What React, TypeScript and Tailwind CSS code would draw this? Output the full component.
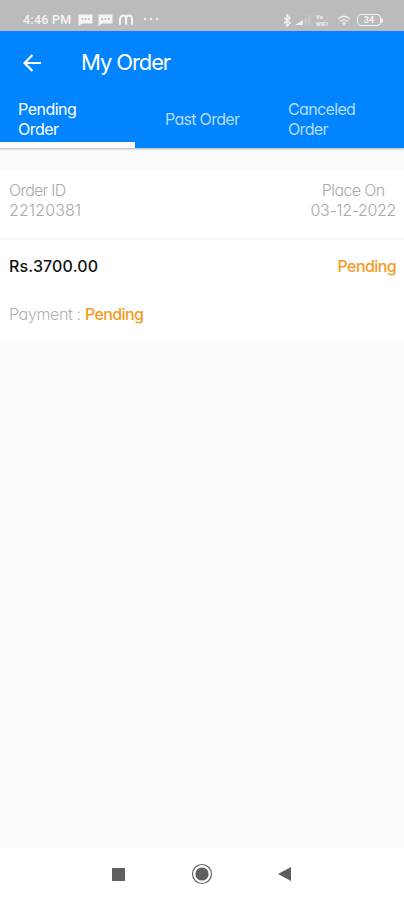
import React from "react";

function ChatIcon() {
  return (
    <svg width="15" height="12" viewBox="0 0 15 12" className="shrink-0">
      <path d="M0.5 0.5H14.5V9.5H4L0.5 12Z" fill="#f4f4f4" />
      <path d="M3.5 5h1.6M6.7 5h1.6M9.9 5h1.6" stroke="#a8a8a8" strokeWidth="1.4" />
    </svg>
  );
}

function StatusBar() {
  return (
    <div className="flex h-[31px] shrink-0 items-start bg-[#bbbbbb] pt-[13px] text-[#f4f4f4]">
      <span className="ml-[23px] w-[49px] whitespace-nowrap font-[Roboto] text-[12.5px] leading-[14px] font-medium tracking-[0.25px]">4:46 PM</span>
      <div className="ml-[6px] flex items-start gap-[5px] pt-px">
        <ChatIcon />
        <ChatIcon />
      </div>
      <svg width="14" height="12" viewBox="0 0 14 12" className="ml-[6px] mt-px" fill="none" stroke="#f4f4f4" strokeWidth="2">
        <path d="M1 10.8V5.5Q1.5 1.5 4.5 1.5Q7 1.5 7 4.5V10.8M7 4.5Q7.5 1.5 10 1.5Q13 1.5 13 4.5V10.8" />
      </svg>
      <svg width="16" height="4" viewBox="0 0 16 4" className="ml-[10px] mt-[4px]" fill="#ededed">
        <circle cx="2" cy="2" r="1.3" />
        <circle cx="8" cy="2" r="1.3" />
        <circle cx="14" cy="2" r="1.3" />
      </svg>
      <svg width="8" height="13" viewBox="0 0 8 13" className="ml-auto mt-px" fill="none" stroke="#f2f2f2" strokeWidth="1.4">
        <path d="M1 3.5L7 9L4 12V1L7 4L1 9.5" />
      </svg>
      <svg width="17" height="12" viewBox="0 0 17 12" className="ml-[4px] mt-px">
        <path d="M0 11L8 6V11Z" fill="#eeeeee" />
        <path d="M10.5 4V11M14.5 1V11" stroke="#cbcbcb" strokeWidth="1.8" />
      </svg>
      <div className="ml-[4px] mt-px w-[15px] whitespace-nowrap font-[Roboto] text-[5.5px] leading-[7px] font-bold tracking-[0.3px]">
        <div>Vo</div>
        <div>WiFi</div>
      </div>
      <svg width="14" height="12" viewBox="0 0 14 12" className="ml-[6px] mt-[2px]" fill="none" stroke="#eeeeee" strokeWidth="1.6">
        <path d="M1 4Q7 -1.5 13 4M3.5 6.5Q7 3.5 10.5 6.5" />
        <path d="M5 8Q7 6.5 9 8L7 10.5Z" fill="#eeeeee" stroke="none" />
      </svg>
      <div className="ml-[6px] mr-[21px] mt-px flex items-center">
        <div className="flex h-[12px] w-[24px] items-center justify-center rounded-[4px] border-[1.5px] border-[#f2f2f2] font-[Roboto] text-[9px] leading-none font-bold">34</div>
        <div className="h-[5px] w-[2px] rounded-r-full bg-[#f2f2f2]" />
      </div>
    </div>
  );
}

function Header() {
  return (
    <header className="h-[117px] shrink-0 bg-[#0084ff] text-white shadow-[0_1px_2px_rgba(0,0,0,0.3)]">
      <div className="flex h-[61px] items-center pl-[23px]">
        <svg width="18" height="18" viewBox="0 0 18 18" className="mt-[2px]" fill="none" stroke="white" strokeWidth="2.2">
          <path d="M18 9H1.5M9.5 1L1.5 9L9.5 17" />
        </svg>
        <h1 className="ml-[40px] text-[22px] leading-[28px] tracking-[-1.1px]">My Order</h1>
      </div>
      <nav className="flex h-[56px] text-[16px] leading-5">
        <div className="flex w-[135px] flex-col">
          <div className="h-[50px] pl-[18px] pt-[7px] tracking-[-0.5px]">Pending<br />Order</div>
          <div className="h-[6px] bg-white" />
        </div>
        <div className="w-[134px] pl-[30px] pt-[17px] tracking-[-0.7px] text-[#b5dcff]">Past Order</div>
        <div className="pl-[19px] pt-[7px] tracking-[-0.65px] text-[#b5dcff]">Canceled<br />Order</div>
      </nav>
    </header>
  );
}

function OrderCard() {
  return (
    <section className="mt-[23px] h-[172px] bg-white text-[16px]">
      <div className="flex h-[69px] justify-between border-b-2 border-[#f7f7f7] pt-[9px] pl-[9px] pr-[8px] leading-5 font-light text-[#aaaaaa]">
        <div>
          <div className="tracking-[-0.75px]">Order ID</div>
          <div className="tracking-[0.1px]">22120381</div>
        </div>
        <div className="text-center">
          <div className="tracking-[-0.6px]">Place On</div>
          <div className="tracking-[-0.35px]">03-12-2022</div>
        </div>
      </div>
      <div className="flex justify-between pt-[16px] pl-[9px] pr-[8px] leading-5">
        <span className="font-medium tracking-[0.15px] text-[#111111]">Rs.3700.00</span>
        <span className="font-medium tracking-[-0.6px] text-[#f39a1e]">Pending</span>
      </div>
      <div className="pt-[28px] pl-[9px] leading-5">
        <span className="font-light tracking-[-0.35px] text-[#b0b0b0]">Payment : </span>
        <span className="font-medium tracking-[-0.6px] text-[#f39a1e]">Pending</span>
      </div>
    </section>
  );
}

function NavigationBar() {
  return (
    <footer className="mt-auto grid h-[52px] grid-cols-[83px_83px_83px] items-center justify-center bg-white">
      <div className="ml-[34px] size-[13px] bg-[#5f5f5f]" />
      <svg width="22" height="22" viewBox="0 0 22 22" className="mx-auto">
        <circle cx="11" cy="11" r="9.5" fill="none" stroke="#666666" strokeWidth="1.2" />
        <circle cx="11" cy="11" r="6.6" fill="#5f5f5f" />
      </svg>
      <svg width="13" height="14" viewBox="0 0 13 14" className="ml-[34px]">
        <path d="M0 7L13 0V14Z" fill="#5f5f5f" />
      </svg>
    </footer>
  );
}

export default function App() {
  return (
    <div className="flex h-[900px] w-[404px] flex-col overflow-hidden bg-[#fafafa] font-[Inter,sans-serif] [font-feature-settings:'cv11']">
      <StatusBar />
      <Header />
      <OrderCard />
      <NavigationBar />
    </div>
  );
}
